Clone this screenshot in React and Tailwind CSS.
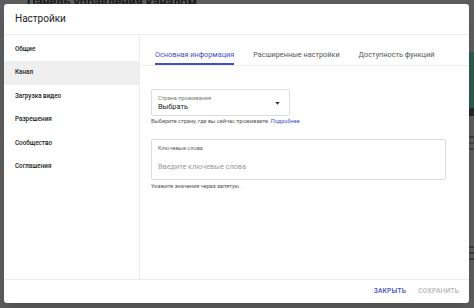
import React, { useState } from 'react';

const navItems = ['Общие', 'Канал', 'Загрузка видео', 'Разрешения', 'Сообщество', 'Соглашения'];
const tabs = ['Основная информация', 'Расширенные настройки', 'Доступность функций'];

const SettingsDialog = () => {
  const [activeNav, setActiveNav] = useState(1);
  const [activeTab, setActiveTab] = useState(0);

  return (
    <div className="absolute left-[4px] top-[4px] w-[465px] h-[299px] bg-white rounded-[3px] shadow-lg flex flex-col overflow-hidden">
      {/* Header */}
      <div className="h-[31px] shrink-0 border-b border-[#ececec] flex items-center pl-[11px]">
        <h2 className="text-[10px] text-[#212121] leading-none">Настройки</h2>
      </div>

      <div className="flex flex-1 min-h-0">
        {/* Left nav */}
        <div className="w-[136px] shrink-0 border-r border-[#ececec] pt-[3px]">
          {navItems.map((item, i) => (
            <button
              key={item}
              onClick={() => setActiveNav(i)}
              className={`w-full h-[23.4px] flex items-center pl-[11px] text-left text-[6.3px] font-medium text-[#222] ${
                activeNav === i ? 'bg-[#efefef]' : ''
              }`}
            >
              {item}
            </button>
          ))}
        </div>

        {/* Content */}
        <div className="flex-1 flex flex-col min-w-0">
          <div className="h-[31px] shrink-0 border-b border-[#ececec] flex gap-[19px] pl-[15px]">
            {tabs.map((tab, i) => (
              <button
                key={tab}
                onClick={() => setActiveTab(i)}
                className={`h-full pt-[12px] text-[7.3px] leading-[12px] whitespace-nowrap border-b-2 ${
                  activeTab === i ? 'text-[#3f51c4] border-[#3f51c4]' : 'text-[#555] border-transparent'
                }`}
              >
                {tab}
              </button>
            ))}
          </div>

          <div className="pl-[11px] pt-[23px]">
            {/* Country select */}
            <div className="w-[139px] h-[27px] border border-[#dcdcdc] rounded-[2px] pl-[6px] pr-[9px] flex items-center justify-between">
              <div className="flex flex-col">
                <span className="text-[5.6px] leading-[8px] text-[#777]">Страна проживания</span>
                <span className="text-[7.4px] leading-[10px] text-[#212121]">Выбрать</span>
              </div>
              <svg width="5" height="3" viewBox="0 0 6 4" className="mt-[1px]">
                <path d="M0 0h6L3 3.5z" fill="#333" />
              </svg>
            </div>
            <p className="mt-[1px] text-[5.6px] leading-[9px] text-[#555]">
              Выберите страну, где вы сейчас проживаете. <span className="text-[#3f51c4]">Подробнее</span>
            </p>

            {/* Keywords */}
            <div className="mt-[13px] w-[295px] h-[41px] border border-[#dcdcdc] rounded-[2px] pl-[6px] pt-[4px]">
              <div className="text-[5.6px] leading-[8px] text-[#666]">Ключевые слова</div>
              <input
                className="mt-[3px] w-[270px] text-[7.3px] leading-[10px] text-[#212121] placeholder-[#9a9a9a] outline-none"
                placeholder="Введите ключевые слова"
              />
            </div>
            <p className="mt-[2px] text-[5.6px] leading-[9px] text-[#555]">Укажите значения через запятую.</p>
          </div>
        </div>
      </div>

      {/* Footer */}
      <div className="h-[24px] shrink-0 border-t border-[#ececec] flex items-center justify-end gap-[12px] pr-[10px]">
        <button className="text-[6.7px] font-medium tracking-[0.2px] text-[#3f51c4]">ЗАКРЫТЬ</button>
        <button className="text-[6.7px] font-medium tracking-[0.2px] text-[#b5b5b5]">СОХРАНИТЬ</button>
      </div>
    </div>
  );
};

export default function App() {
  return (
    <div className="relative w-[474px] h-[308px] overflow-hidden bg-[#5c5c5c] font-['Roboto',sans-serif]">
      {/* Page behind the overlay */}
      <h1 className="-mt-[5px] ml-[27px] text-[12.5px] font-bold text-[#1a1a1a] leading-[14px]">
        Панель управления каналом
      </h1>
      <div className="absolute right-0 top-[52px] w-[5px] flex flex-col">
        <div className="h-[56px] bg-[#2f5a4c]" />
        <div className="h-[8px] bg-[#262626]" />
        <div className="mt-[20px] h-[2px] bg-[#3a3a3a]" />
        <div className="mt-[4px] h-[2px] bg-[#444]" />
        <div className="mt-[4px] h-[2px] bg-[#444]" />
        <div className="mt-[96px] h-[2px] bg-[#3a3a3a]" />
        <div className="mt-[4px] h-[2px] bg-[#3a3a3a]" />
        <div className="mt-[4px] h-[2px] bg-[#3a3a3a]" />
      </div>

      <SettingsDialog />
    </div>
  );
}
